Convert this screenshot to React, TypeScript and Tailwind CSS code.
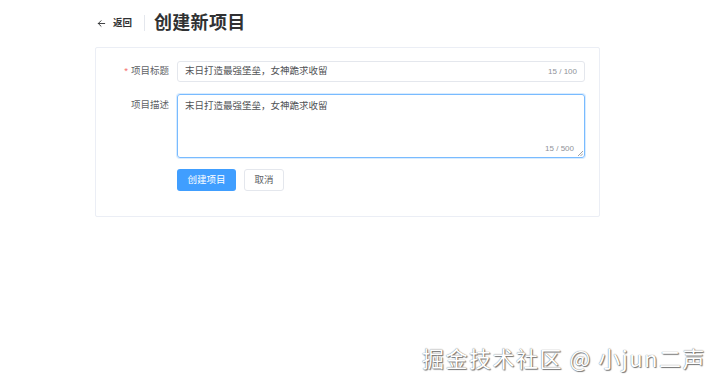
import { useState } from "react";

const font = "font-['Liberation_Sans','Noto_Sans_CJK_SC',sans-serif]";

const App = () => {
  const [title, setTitle] = useState("末日打造最强堡垒，女神跪求收留");
  const [desc, setDesc] = useState("末日打造最强堡垒，女神跪求收留");

  return (
    <div className={`relative w-[720px] h-[388px] bg-white overflow-hidden ${font}`}>
      {/* Header */}
      <div className="flex items-center pl-[96px] pt-[12px] h-[34px]">
        <button className="flex items-center gap-[6px] text-[#303133]">
          <svg width="11" height="11" viewBox="0 0 24 24" fill="none" stroke="#303133" strokeWidth="2" strokeLinecap="round" strokeLinejoin="round">
            <path d="M19 12H5" />
            <path d="M11 18l-6-6 6-6" />
          </svg>
          <span className="text-[9.5px] font-bold leading-none">返回</span>
        </button>
        <div className="w-px h-[16px] bg-[#e4e7ed] ml-[12px] mr-[9px]" />
        <h1 className="text-[18px] font-bold text-[#303133] leading-none tracking-[0.3px]">创建新项目</h1>
      </div>

      {/* Card */}
      <div className="ml-[95px] mt-[13px] w-[505px] border border-[#ebeef5] rounded-[2px] pt-[13px] pb-[25px] pr-[14px]">
        <div className="flex items-center">
          <label className="w-[81px] pr-[8px] text-right text-[9.5px] text-[#606266]">
            <span className="text-[#f56c6c] mr-[3px]">*</span>项目标题
          </label>
          <div className="flex-1 h-[21px] border border-[#e4e7ed] rounded-[3px] flex items-center px-[7px]">
            <input
              value={title}
              onChange={(e) => setTitle(e.target.value)}
              className="flex-1 bg-transparent outline-none text-[9.5px] text-[#505255]"
            />
            <span className="text-[8px] text-[#909399]">{title.length} / 100</span>
          </div>
        </div>

        <div className="flex items-start mt-[12px]">
          <label className="w-[81px] pr-[8px] pt-[4px] text-right text-[9.5px] text-[#606266]">项目描述</label>
          <div className="relative flex-1 h-[64px] border border-[#79bbff] rounded-[3px] shadow-[0_0_0_1px_#d9ecff]">
            <textarea
              value={desc}
              onChange={(e) => setDesc(e.target.value)}
              className="w-full h-full resize-none bg-transparent outline-none text-[9.5px] text-[#505255] px-[7px] py-[3px] leading-[15px]"
            />
            <span className="absolute right-[10px] bottom-[2px] text-[8px] text-[#909399]">{desc.length} / 500</span>
            <svg className="absolute right-[1px] bottom-[1px]" width="5" height="5" viewBox="0 0 5 5">
              <path d="M5 0L0 5M5 2.5L2.5 5" stroke="#606266" strokeWidth="0.6" />
            </svg>
          </div>
        </div>

        <div className="flex gap-[8px] mt-[11px] pl-[81px]">
          <button className="h-[22px] w-[59px] rounded-[3px] bg-[#409eff] text-white text-[9.5px]">创建项目</button>
          <button className="h-[22px] w-[40px] rounded-[3px] border border-[#e4e7ed] bg-white text-[#606266] text-[9.5px]">取消</button>
        </div>
      </div>

      {/* Watermark */}
      <div className="absolute right-[14px] bottom-[14px] text-[22px] tracking-[1.5px] text-white font-['Noto_Sans_CJK_SC',sans-serif] [text-shadow:0_0_1px_#555,1px_1px_1px_#777]">
        掘金技术社区 @ 小jun二声
      </div>
    </div>
  );
};

export default App;
